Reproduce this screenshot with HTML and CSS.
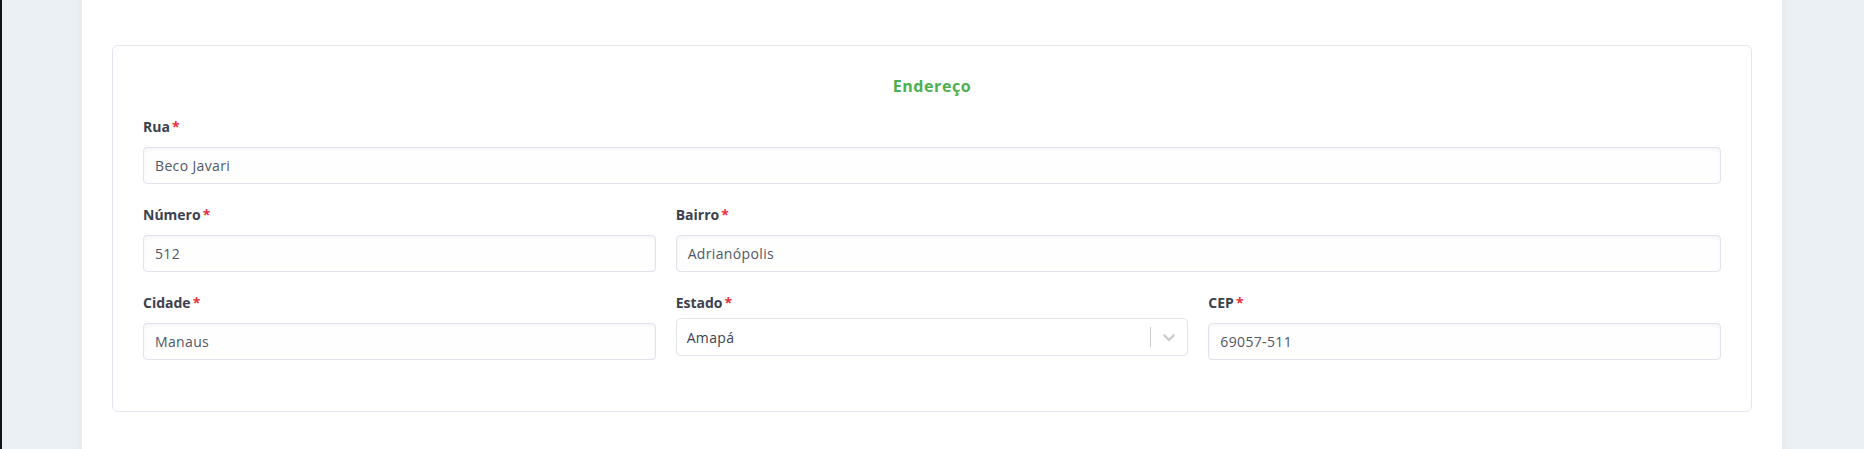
FILE: index.html
```html
<!DOCTYPE html>
<html lang="pt-BR">
<head>
<meta charset="utf-8">
<title>Endereço</title>
<link rel="stylesheet" href="styles.css">
</head>
<body>
<div class="edge"></div>
<main class="main">
  <div class="panel">
    <section class="card">
      <h2 class="card-title">Endereço</h2>
      <div class="grid">
        <div class="field span-3">
          <label class="label">Rua<span class="req">*</span></label>
          <div class="input">Beco Javari</div>
        </div>
        <div class="field">
          <label class="label">Número<span class="req">*</span></label>
          <div class="input">512</div>
        </div>
        <div class="field span-2">
          <label class="label">Bairro<span class="req">*</span></label>
          <div class="input">Adrianópolis</div>
        </div>
        <div class="field">
          <label class="label">Cidade<span class="req">*</span></label>
          <div class="input">Manaus</div>
        </div>
        <div class="field">
          <label class="label">Estado<span class="req">*</span></label>
          <div class="select">
            <span class="select-value">Amapá</span>
            <span class="select-sep"></span>
            <span class="select-ind">
              <svg width="20" height="20" viewBox="0 0 20 20" aria-hidden="true"><path fill="#cccccc" d="M4.516 7.548c0.436-0.446 1.043-0.481 1.576 0l3.908 3.747 3.908-3.747c0.533-0.481 1.141-0.446 1.574 0 0.436 0.445 0.408 1.197 0 1.615-0.406 0.418-4.695 4.502-4.695 4.502-0.217 0.223-0.502 0.335-0.787 0.335s-0.57-0.112-0.789-0.335c0 0-4.287-4.084-4.695-4.502s-0.436-1.17 0-1.615z"/></svg>
            </span>
          </div>
        </div>
        <div class="field">
          <label class="label">CEP<span class="req">*</span></label>
          <div class="input">69057-511</div>
        </div>
      </div>
    </section>
  </div>
</main>
</body>
</html>
```

FILE: styles.css
```css
html, body {
  margin: 0;
  padding: 0;
}
body {
  display: flex;
  min-height: 449px;
  background: #ebf0f4;
  font-family: "Open Sans", "Noto Sans", Arial, sans-serif;
  overflow: hidden;
}
.edge {
  width: 2px;
  flex: none;
  background: #121417;
}
.main {
  flex: 1;
  display: flex;
  padding: 0 82px 0 80px;
}
.panel {
  flex: 1;
  background: #ffffff;
  padding: 45px 30px 40px;
  box-shadow: 0 0 8px rgba(40, 60, 90, 0.07);
}
.card {
  border: 1px solid #e1e5ee;
  border-radius: 6px;
  padding: 28px 30px 51px;
}
.card-title {
  margin: 0 0 18px;
  text-align: center;
  font-size: 16px;
  line-height: 24px;
  font-weight: 700;
  letter-spacing: 0.6px;
  color: #4caf50;
}
.grid {
  display: grid;
  grid-template-columns: repeat(3, 1fr);
  column-gap: 20px;
  row-gap: 20px;
}
.span-3 { grid-column: span 3; }
.span-2 { grid-column: span 2; }
.field {
  display: flex;
  flex-direction: column;
}
.label {
  font-size: 14px;
  line-height: 21px;
  font-weight: 700;
  color: #3b414e;
}
.req {
  color: #ec2f3b;
  margin-left: 2px;
}
.input {
  margin-top: 10px;
  height: 35px;
  box-sizing: content-box;
  border: 1px solid #dfe3ec;
  border-radius: 4px;
  background: #fefefe;
  box-shadow: inset 0 2px 4px rgba(0, 0, 0, 0.045);
  padding: 0 11px;
  font-size: 14px;
  line-height: 35px;
  letter-spacing: 0.35px;
  color: #505766;
}
.select {
  margin-top: 5px;
  height: 36px;
  border: 1px solid #e0e4ed;
  border-radius: 4px;
  background: #ffffff;
  display: flex;
  align-items: center;
  padding-left: 10px;
}
.select-value {
  flex: 1;
  font-size: 14px;
  letter-spacing: 0.35px;
  color: #3c4250;
}
.select-sep {
  width: 1px;
  height: 20px;
  background: #cccccc;
}
.select-ind {
  width: 36px;
  display: flex;
  align-items: center;
  justify-content: center;
}
.select-ind svg {
  display: block;
}
```
